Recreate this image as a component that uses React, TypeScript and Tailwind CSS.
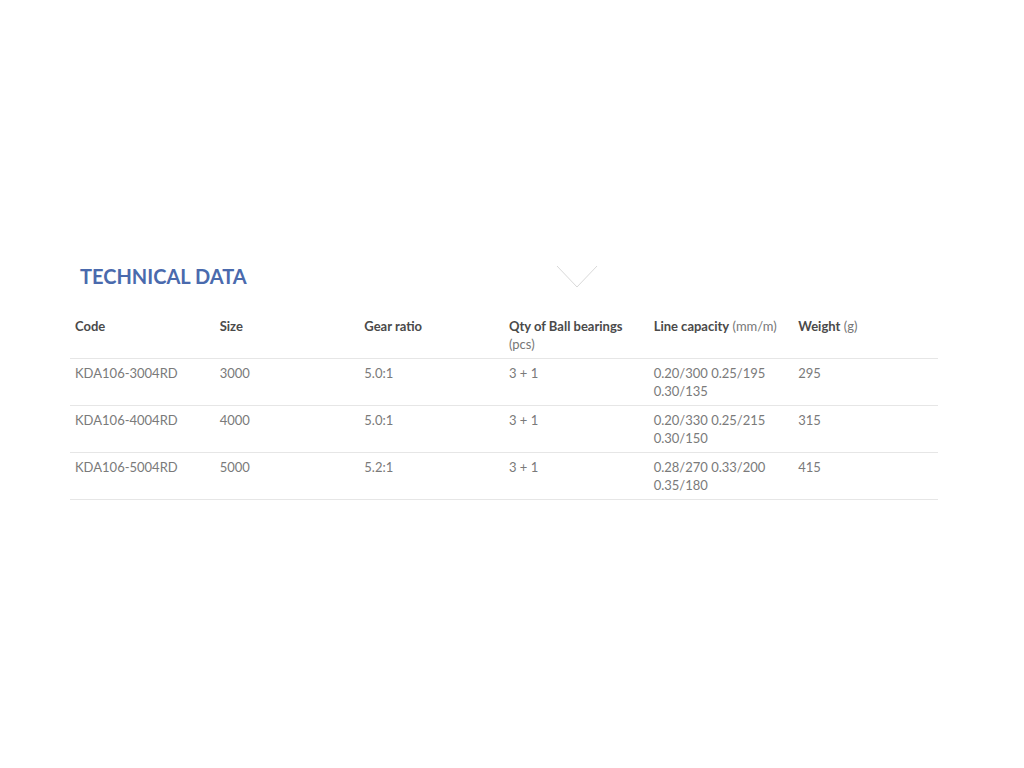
const COLUMNS = [
  { label: "Code" },
  { label: "Size" },
  { label: "Gear ratio" },
  { label: "Qty of Ball bearings", unit: "(pcs)", block: true },
  { label: "Line capacity", unit: "(mm/m)" },
  { label: "Weight", unit: "(g)" },
]

const ROWS = [
  ["KDA106-3004RD", "3000", "5.0:1", "3 + 1", "0.20/300 0.25/195 0.30/135", "295"],
  ["KDA106-4004RD", "4000", "5.0:1", "3 + 1", "0.20/330 0.25/215 0.30/150", "315"],
  ["KDA106-5004RD", "5000", "5.2:1", "3 + 1", "0.28/270 0.33/200 0.35/180", "415"],
]

export default function App() {
  return (
    <div className="min-h-screen bg-white font-['Lato',sans-serif]">
      <div className="ml-[70px] w-[868px] pt-[263px]">
        <div className="relative h-[30px]">
          <h2 className="pl-[10px] text-[20px] leading-[26px] font-bold text-[#4a6aad]">
            TECHNICAL DATA
          </h2>
          <svg
            className="absolute top-[2px] left-[486px]"
            width="42"
            height="24"
            viewBox="0 0 42 24"
            fill="none"
          >
            <path d="M1 1 L21 22 L41 1" stroke="#d9d9d9" strokeWidth="1" />
          </svg>
        </div>

        <table className="mt-[19px] w-full table-fixed border-collapse text-[13px] leading-[18px]">
          <thead>
            <tr className="border-b border-[#e6e6e6]">
              {COLUMNS.map((c) => (
                <th
                  key={c.label}
                  className="px-[5px] pt-[5px] pb-[5px] text-left align-top font-bold text-[#4a4a4a]"
                >
                  {c.label}
                  {c.unit &&
                    (c.block ? (
                      <span className="block font-normal text-[#777]">{c.unit}</span>
                    ) : (
                      <span className="font-normal text-[#777]"> {c.unit}</span>
                    ))}
                </th>
              ))}
            </tr>
          </thead>
          <tbody>
            {ROWS.map((r) => (
              <tr key={r[0]} className="border-b border-[#e6e6e6]">
                {r.map((v, i) => (
                  <td
                    key={i}
                    className="h-[47px] px-[5px] pt-[5px] pb-[5px] align-top text-[#7a7a7a]"
                  >
                    {v}
                  </td>
                ))}
              </tr>
            ))}
          </tbody>
        </table>
      </div>
    </div>
  )
}
